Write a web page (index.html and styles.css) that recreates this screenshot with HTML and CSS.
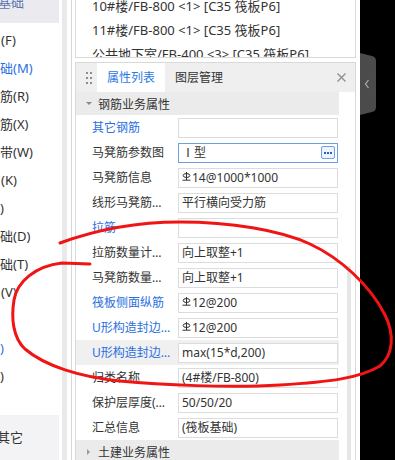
FILE: index.html
```html
<!DOCTYPE html>
<html>

<head>
  <meta charset="UTF-8">
  <title>属性列表</title>
  <link rel="stylesheet" href="styles.css">
</head>

<body>
  <div class="nav">
    <div class="nav-head">基础</div>
    <ul class="nav-list">
      <li class="in">(F)</li>
      <li class="blue">础(M)</li>
      <li>筋(R)</li>
      <li>筋(X)</li>
      <li>带(W)</li>
      <li class="in">(K)</li>
      <li>)</li>
      <li>础(D)</li>
      <li>础(T)</li>
      <li class="in">(V)</li>
      <li></li>
      <li class="blue">)</li>
      <li>)</li>
    </ul>
    <div class="nav-foot">其它</div>
  </div>

  <div class="splitter"></div>

  <div class="main">
    <div class="list-panel">
      <div class="list-row">10#楼/FB-800 &lt;1&gt; [C35 筏板P6]</div>
      <div class="list-row">11#楼/FB-800 &lt;1&gt; [C35 筏板P6]</div>
      <div class="list-row">公共地下室/FB-400 &lt;3&gt; [C35 筏板P6]</div>
    </div>

    <div class="props">
      <div class="tabs">
        <div class="handle"><span></span><span></span><span></span><span></span><span></span><span></span></div>
        <div class="tab active">属性列表</div>
        <div class="tab">图层管理</div>
        <div class="close">
          <svg width="9" height="9" viewBox="0 0 9 9"><path d="M0.5 0.5L8.5 8.5M8.5 0.5L0.5 8.5" stroke="#8c8c8c" stroke-width="1.2"/></svg>
        </div>
      </div>

      <div class="props-body">
        <div class="props-content">
          <div class="group"><span class="caret-down"></span>钢筋业务属性</div>

          <div class="row"><div class="label blue">其它钢筋</div><div class="value"></div></div>
          <div class="row"><div class="label">马凳筋参数图</div><div class="value focus">Ⅰ型<div class="more"><span></span><span></span><span></span></div></div></div>
          <div class="row"><div class="label">马凳筋信息</div><div class="value"><svg class="bar" width="9" height="9" viewBox="0 0 9 9"><ellipse cx="4.5" cy="3.5" rx="3.3" ry="2" fill="none" stroke="#333"/><path d="M4.5 0V8M0.5 8.2H8.5" stroke="#333"/></svg>14@1000*1000</div></div>
          <div class="row"><div class="label">线形马凳筋参数图</div><div class="value">平行横向受力筋</div></div>
          <div class="row"><div class="label blue">拉筋</div><div class="value"></div></div>
          <div class="row"><div class="label">拉筋数量计算方式</div><div class="value">向上取整+1</div></div>
          <div class="row"><div class="label">马凳筋数量计算方式</div><div class="value">向上取整+1</div></div>
          <div class="row"><div class="label blue">筏板侧面纵筋</div><div class="value"><svg class="bar" width="9" height="9" viewBox="0 0 9 9"><ellipse cx="4.5" cy="3.5" rx="3.3" ry="2" fill="none" stroke="#333"/><path d="M4.5 0V8M0.5 8.2H8.5" stroke="#333"/></svg>12@200</div></div>
          <div class="row"><div class="label blue">U形构造封边钢筋</div><div class="value"><svg class="bar" width="9" height="9" viewBox="0 0 9 9"><ellipse cx="4.5" cy="3.5" rx="3.3" ry="2" fill="none" stroke="#333"/><path d="M4.5 0V8M0.5 8.2H8.5" stroke="#333"/></svg>12@200</div></div>
          <div class="row hover"><div class="label blue">U形构造封边钢筋弯折长度</div><div class="value">max(15*d,200)</div></div>
          <div class="row"><div class="label">归类名称</div><div class="value">(4#楼/FB-800)</div></div>
          <div class="row"><div class="label">保护层厚度(mm)</div><div class="value">50/50/20</div></div>
          <div class="row"><div class="label">汇总信息</div><div class="value">(筏板基础)</div></div>

          <div class="group"><span class="caret-right"></span>土建业务属性</div>
        </div>
        <div class="scroll"><div class="thumb"></div></div>
      </div>
    </div>
  </div>

  <div class="dock">
    <svg class="dock-tab" width="16" height="62" viewBox="0 0 16 62">
      <path d="M0 0L12 3Q16 4 16 8L16 54Q16 58 12 59L0 62Z" fill="#4b4b4b"/>
      <path d="M8.5 27L5.5 31L8.5 35" fill="none" stroke="#b0b0b0" stroke-width="1.2"/>
    </svg>
  </div>

  <svg class="mark" width="395" height="460" viewBox="0 0 395 460">
    <path d="M60 243C90 232 130 222 180 222C230 222 280 230 310 244C340 258 370 285 385 315C395 335 393 355 380 366C360 378 330 382 280 385C230 388 160 385 120 381C80 377 45 366 25 349C13 338 11 318 14 300C17 282 35 266 62 263L90 264" fill="none" stroke="#f01414" stroke-width="3" stroke-linecap="round" stroke-linejoin="round"/>
  </svg>
</body>

</html>
```

FILE: styles.css
```css
body {
  margin: 0;
  height: 460px;
  display: flex;
  overflow: hidden;
  position: relative;
  background-color: #fff;
  color: #333;
  font-family: "Noto Sans", "Noto Sans CJK SC", sans-serif;
}

.blue {
  color: #2a6fe0;
}

/* left tree */
.nav {
  width: 59px;
  flex: none;
  display: flex;
  flex-direction: column;
  font-size: 13px;
  white-space: nowrap;
  overflow: hidden;
}

.nav-head {
  height: 23px;
  line-height: 4px;
  background-color: #ebebef;
  color: #5b78b0;
  text-indent: -2px;
}

.nav-list {
  list-style: none;
  margin: 3px 0 0;
  padding: 0;
}

.nav-list li {
  height: 28px;
  line-height: 28px;
}

.nav-list li.in {
  padding-left: 1px;
}

.nav-foot {
  margin-top: auto;
  height: 45px;
  line-height: 45px;
  background-color: #f3f3f5;
  text-indent: -3px;
}

.splitter {
  width: 16px;
  flex: none;
  background: linear-gradient(to right, #fff 3px, #e9e9eb 3px, #e9e9eb 8px, #fff 8px, #fff 12px, #d6d6d6 12px, #d6d6d6 13px, #fff 13px);
}

/* right side */
.main {
  width: 285px;
  flex: none;
  padding-right: 4px;
  box-sizing: border-box;
  display: flex;
  flex-direction: column;
}

.list-panel {
  height: 58px;
  flex: none;
  box-sizing: border-box;
  border: 1px solid #d9d9d9;
  border-top: 0;
  overflow: hidden;
  padding-left: 16px;
  font-size: 13px;
}

.list-row {
  height: 24px;
  line-height: 24px;
  white-space: nowrap;
}

.list-row:first-child {
  margin-top: -6px;
}

.props {
  margin-top: 4px;
  flex: 1;
  min-height: 0;
  border: 1px solid #d9d9d9;
  border-bottom: 0;
  display: flex;
  flex-direction: column;
  overflow: hidden;
}

.tabs {
  height: 29px;
  flex: none;
  display: flex;
  background-color: #efefef;
  font-size: 12px;
}

.handle {
  width: 21px;
  box-sizing: border-box;
  padding-left: 10px;
  display: grid;
  grid-template-columns: 2px 2px;
  grid-auto-rows: 2px;
  column-gap: 2px;
  row-gap: 3px;
  align-content: center;
}

.handle span {
  background-color: #8c8c8c;
}

.tab {
  padding: 0 10px;
  line-height: 29px;
}

.tab.active {
  background-color: #fff;
  color: #2a7ae2;
}

.close {
  margin-left: auto;
  width: 28px;
  display: flex;
  align-items: center;
  justify-content: center;
}

.props-body {
  flex: 1;
  min-height: 0;
  display: flex;
}

.props-content {
  width: 263px;
  flex: none;
  font-size: 12px;
}

.group {
  height: 23px;
  display: flex;
  align-items: center;
  padding-left: 10px;
  background-color: #ebebeb;
}

.caret-down {
  border-left: 3px solid transparent;
  border-right: 3px solid transparent;
  border-top: 3px solid #8a8a8a;
  margin-right: 6px;
}

.caret-right {
  border-top: 3px solid transparent;
  border-bottom: 3px solid transparent;
  border-left: 3px solid #9a9a9a;
  margin: 0 8px 0 1px;
}

.row {
  height: 25px;
  display: flex;
  align-items: center;
  padding-left: 16px;
}

.row.hover {
  background-color: #f0f0f0;
}

.label {
  width: 79px;
  margin-right: 7px;
  line-height: 25px;
  white-space: nowrap;
  overflow: hidden;
  text-overflow: ellipsis;
}

.value {
  width: 160px;
  height: 20px;
  box-sizing: border-box;
  border: 1px solid #dcdcdc;
  background-color: #fff;
  padding-left: 3px;
  line-height: 18px;
  display: flex;
  align-items: center;
  white-space: nowrap;
}

.value.focus {
  border-color: #6f9fe2;
}

.more {
  margin-left: auto;
  margin-right: 2px;
  width: 14px;
  height: 13px;
  box-sizing: border-box;
  border: 1px solid #6f9fe2;
  border-radius: 2px;
  background-color: #eef4fd;
  display: flex;
  align-items: center;
  justify-content: center;
  gap: 1px;
}

.more span {
  width: 2px;
  height: 2px;
  background-color: #2b5fb4;
}

.bar {
  align-self: flex-start;
  margin: 3px 1px 0 0;
  flex: none;
}

.scroll {
  width: 16px;
  flex: none;
}

.thumb {
  margin: 174px 0 0 8px;
  width: 4px;
  height: 400px;
  background-color: #e6e6e6;
}

.dock {
  width: 35px;
  flex: none;
  background-color: #000;
}

.dock-tab {
  display: block;
  margin-top: 53px;
}

.mark {
  position: absolute;
  left: 0;
  top: 0;
  pointer-events: none;
}
```
